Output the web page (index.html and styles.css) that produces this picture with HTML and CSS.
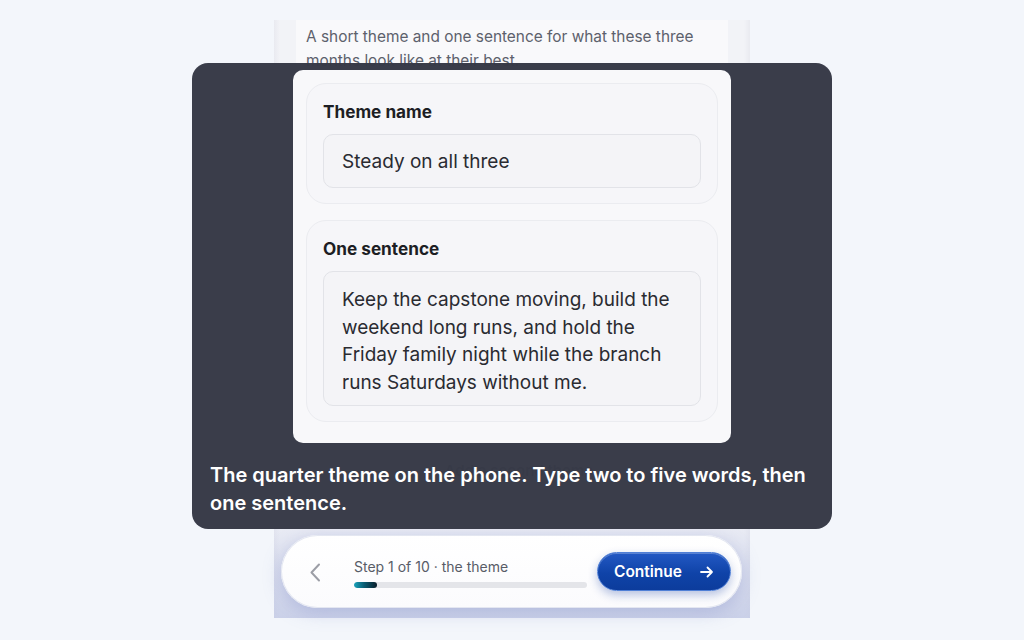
FILE: index.html
```html
<!DOCTYPE html>
<html lang="en">
<head>
<meta charset="utf-8">
<title>Quarter theme</title>
<link rel="stylesheet" href="styles.css">
</head>
<body>
<div class="stage">
  <div class="phone">
    <div class="phone-card">
      <p class="intro">A short theme and one sentence for what these three months look like at their best.</p>
      <div class="ghost-add">+ Add a second theme</div>
    </div>
    <div class="navwrap">
      <div class="navpill">
        <button class="back" aria-label="Back">
          <svg width="12" height="19" viewBox="0 0 12 19"><polyline points="10,1.5 2.5,9.5 10,17.5" fill="none" stroke="#9c9ea6" stroke-width="2" stroke-linecap="round" stroke-linejoin="round"/></svg>
        </button>
        <div class="progress">
          <div class="step">Step 1 of 10 · the theme</div>
          <div class="track"><div class="fill" style="width:23px"></div></div>
        </div>
        <button class="continue">
          <span>Continue</span>
          <svg width="14" height="12" viewBox="0 0 14 12"><path d="M1 6h11M7.5 1.5 12 6l-4.5 4.5" fill="none" stroke="#fff" stroke-width="1.8" stroke-linecap="round" stroke-linejoin="round"/></svg>
        </button>
      </div>
    </div>
  </div>

  <div class="overlay">
    <div class="zoom-card">
      <div class="group">
        <div class="label">Theme name</div>
        <div class="field">Steady on all three</div>
      </div>
      <div class="group">
        <div class="label">One sentence</div>
        <div class="field area">Keep the capstone moving, build the weekend long runs, and hold the Friday family night while the branch runs Saturdays without me.</div>
      </div>
    </div>
    <p class="caption">The quarter theme on the phone. Type two to five words, then one sentence.</p>
  </div>
</div>
</body>
</html>
```

FILE: styles.css
```css
* { box-sizing: border-box; }

html, body {
  margin: 0;
  padding: 0;
  width: 1024px;
  height: 640px;
  overflow: hidden;
  background: #f3f6fb;
  font-family: "Inter", "Liberation Sans", sans-serif;
}

.stage {
  position: relative;
  width: 1024px;
  height: 640px;
  padding-top: 20px;
  display: flex;
  justify-content: center;
}

.phone {
  width: 476px;
  height: 598px;
  background: linear-gradient(90deg, #e9eaf0 0, #f2f3f7 6px, #f2f3f7 470px, #e9eaf0 476px);
  display: flex;
  flex-direction: column;
}

.phone-card {
  flex: 1;
  margin: 0 22px;
  background: #f9f9fb;
  padding: 5px 10px 0;
  display: flex;
  flex-direction: column;
  align-items: center;
}

.intro {
  margin: 0;
  align-self: stretch;
  font-size: 15.4px;
  line-height: 24px;
  color: #5d616c;
}

.ghost-add {
  margin-top: 372px;
  width: 380px;
  height: 50px;
  border: 1px solid #e6e7ec;
  border-radius: 16px;
  display: flex;
  align-items: center;
  justify-content: center;
  font-size: 15px;
  font-weight: 600;
  color: #6b6f7a;
}

.navwrap {
  height: 94px;
  padding: 11px 8px 10px 7px;
  background: linear-gradient(180deg, rgba(205,210,235,0.2) 0, rgba(190,198,228,0.75) 100%);
}

.navpill {
  height: 73px;
  border-radius: 37px;
  background: linear-gradient(180deg, #ffffff 0, #fbfbfd 100%);
  box-shadow: 0 4px 18px rgba(120,132,196,0.35), inset 0 0 0 1px rgba(225,228,240,0.9);
  display: flex;
  align-items: center;
  padding: 0 11px 0 28px;
}

.back {
  border: 0;
  background: none;
  padding: 0;
  width: 45px;
  display: flex;
  align-items: center;
  margin-top: 1px;
}

.progress {
  flex: 1;
  display: flex;
  flex-direction: column;
  gap: 6px;
  margin-right: 10px;
  padding-top: 2px;
}

.step {
  font-size: 14px;
  line-height: 18px;
  color: #585c67;
}

.track {
  width: 233px;
  height: 6px;
  border-radius: 3px;
  background: #e4e5e9;
  overflow: hidden;
}

.fill {
  height: 100%;
  border-radius: 3px;
  background: linear-gradient(90deg, #1aa3bb 0, #0a5c72 45%, #0a1d2a 100%);
}

.continue {
  width: 134px;
  height: 39px;
  border-radius: 20px;
  border: 1px solid #4f7fd6;
  background: linear-gradient(180deg, #2359c4 0, #0f43a8 55%, #0c3c9c 100%);
  box-shadow: 0 4px 10px rgba(20,60,160,0.3), inset 0 1px 0 rgba(255,255,255,0.25);
  color: #fff;
  font-family: "Inter", "Liberation Sans", sans-serif;
  font-size: 15.5px;
  font-weight: 600;
  display: flex;
  align-items: center;
  justify-content: space-between;
  padding: 0 16px 0 16px;
}

.overlay {
  position: absolute;
  left: 192px;
  top: 63px;
  width: 640px;
  height: 466px;
  border-radius: 16px;
  background: rgba(54,57,70,0.98);
  padding: 7px 18px 0;
  display: flex;
  flex-direction: column;
  align-items: center;
}

.zoom-card {
  width: 438px;
  height: 373px;
  border-radius: 10px;
  background: #f8f8fa;
  padding: 13px 13px;
  display: flex;
  flex-direction: column;
  gap: 16px;
}

.group {
  border: 1px solid #ebecf0;
  border-radius: 20px;
  background: #f6f6f9;
  padding: 17px 16px 15px;
  display: flex;
  flex-direction: column;
  gap: 11px;
}

.label {
  font-size: 17.2px;
  line-height: 22px;
  font-weight: 700;
  color: #1d1e24;
}

.field {
  height: 54px;
  border: 1px solid #e2e3e8;
  border-radius: 10px;
  background: #f4f4f7;
  padding: 0 18px;
  display: flex;
  align-items: center;
  font-size: 19px;
  color: #2a2b31;
}

.field.area {
  display: block;
  height: 135px;
  padding: 14px 18px 0;
  line-height: 27.5px;
}

.caption {
  margin: 18px 0 0;
  align-self: stretch;
  font-size: 20px;
  line-height: 28px;
  font-weight: 600;
  color: #ffffff;
}
```
